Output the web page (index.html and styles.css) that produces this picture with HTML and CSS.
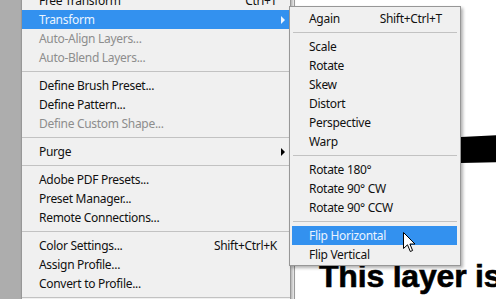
FILE: index.html
```html
<!DOCTYPE html>
<html lang="en">
<head>
  <meta charset="UTF-8">
  <title>Edit menu - Transform</title>
  <link rel="stylesheet" href="styles.css">
</head>
<body>

  <!-- tools dock on the left -->
  <div class="dock"></div>

  <!-- document area -->
  <div class="workspace">
    <div class="canvas">
      <svg class="stroke" width="40" height="32" viewBox="0 0 40 32">
        <polygon points="0,2 40,0 40,27 0,28" fill="#000"/>
      </svg>
      <div class="caption">This layer is</div>
    </div>

    <!-- Edit menu -->
    <div class="menu main-menu">
      <div class="item"><span>Free Transform</span><span class="key">Ctrl+T</span></div>
      <div class="item active"><span>Transform</span><span class="arrow"></span></div>
      <div class="item off"><span>Auto-Align Layers...</span></div>
      <div class="item off"><span>Auto-Blend Layers...</span></div>
      <div class="sep"></div>
      <div class="item"><span>Define Brush Preset...</span></div>
      <div class="item"><span>Define Pattern...</span></div>
      <div class="item off"><span>Define Custom Shape...</span></div>
      <div class="sep"></div>
      <div class="item"><span>Purge</span><span class="arrow"></span></div>
      <div class="sep"></div>
      <div class="item"><span>Adobe PDF Presets...</span></div>
      <div class="item"><span>Preset Manager...</span></div>
      <div class="item"><span>Remote Connections...</span></div>
      <div class="sep"></div>
      <div class="item"><span>Color Settings...</span><span class="key">Shift+Ctrl+K</span></div>
      <div class="item"><span>Assign Profile...</span></div>
      <div class="item"><span>Convert to Profile...</span></div>
      <div class="sep"></div>
      <div class="item"><span>Keyboard Shortcuts...</span></div>
    </div>

    <!-- Transform submenu -->
    <div class="menu sub-menu">
      <div class="item"><span>Again</span><span class="key">Shift+Ctrl+T</span></div>
      <div class="sep"></div>
      <div class="item"><span>Scale</span></div>
      <div class="item"><span>Rotate</span></div>
      <div class="item"><span>Skew</span></div>
      <div class="item"><span>Distort</span></div>
      <div class="item"><span>Perspective</span></div>
      <div class="item"><span>Warp</span></div>
      <div class="sep"></div>
      <div class="item"><span>Rotate 180°</span></div>
      <div class="item"><span>Rotate 90° CW</span></div>
      <div class="item"><span>Rotate 90° CCW</span></div>
      <div class="sep"></div>
      <div class="item active"><span>Flip Horizontal</span></div>
      <div class="item"><span>Flip Vertical</span></div>
    </div>

    <!-- mouse pointer -->
    <svg class="pointer" width="13" height="21" viewBox="0 0 13 21">
      <polygon points="0.5,0.5 0.5,16.5 4.5,12.8 7.3,19.5 9.6,18.5 6.9,12 12,12" fill="#fff" stroke="#000" stroke-width="1" stroke-linejoin="round"/>
    </svg>
  </div>

</body>
</html>
```

FILE: styles.css
```css
  body {
    margin: 0;
    width: 496px;
    height: 299px;
    overflow: hidden;
    display: flex;
    font-family: "Noto Sans", "Open Sans", sans-serif;
    font-size: 12px;
    letter-spacing: -0.3px;
    color: #111;
    background-color: #fff;
  }
  .dock {
    width: 21px;
    flex-shrink: 0;
    background-color: #adadad;
  }
  .workspace {
    flex: 1;
    position: relative;
    background-color: #fff;
  }
  .canvas {
    margin-left: 273px;
    height: 100%;
    border-left: 1px solid #a3a3a3;
    position: relative;
  }
  .stroke {
    position: absolute;
    left: 166px;
    top: 135px;
  }
  .caption {
    position: absolute;
    left: 24px;
    top: 258px;
    font-family: "Liberation Sans", Arial, sans-serif;
    font-weight: bold;
    font-size: 32px;
    letter-spacing: -0.2px;
    -webkit-text-stroke: 0.6px #000;
    color: #000;
    white-space: nowrap;
  }

  /* menus */
  .menu {
    position: absolute;
    background-color: #f0f0f0;
    border: 1px solid #979797;
    box-shadow: 2px 2px 3px rgba(0, 0, 0, 0.3);
    padding: 2px 0;
  }
  .main-menu {
    left: 0;
    top: -12px;
    width: 268px;
  }
  .sub-menu {
    left: 268px;
    top: 6px;
    width: 170px;
    padding: 2px 0 1px;
  }
  .item {
    height: 19px;
    line-height: 19px;
    display: flex;
    justify-content: space-between;
    align-items: center;
    white-space: nowrap;
  }
  .main-menu .item {
    margin: 0 1px 0 0;
    padding: 0 4px 0 17px;
  }
  .main-menu .key {
    margin-right: 8px;
  }
  .sub-menu .item {
    margin: 0 3px 0 2px;
    padding: 0 15px 0 17px;
  }
  .item.off {
    color: #8d8d8d;
  }
  .item.active {
    background-color: #3391ef;
    color: #eaf4ff;
  }
  .arrow {
    width: 0;
    height: 0;
    border-left: 4px solid #000;
    border-top: 4px solid transparent;
    border-bottom: 4px solid transparent;
  }
  .active .arrow {
    border-left-color: #eaf4ff;
  }
  .sep {
    height: 1px;
    margin: 4px 0;
    background-color: #c2c2c2;
  }
  .sub-menu .sep {
    margin: 4px 3px 4px 3px;
  }
  .pointer {
    position: absolute;
    left: 382px;
    top: 232px;
  }
```
